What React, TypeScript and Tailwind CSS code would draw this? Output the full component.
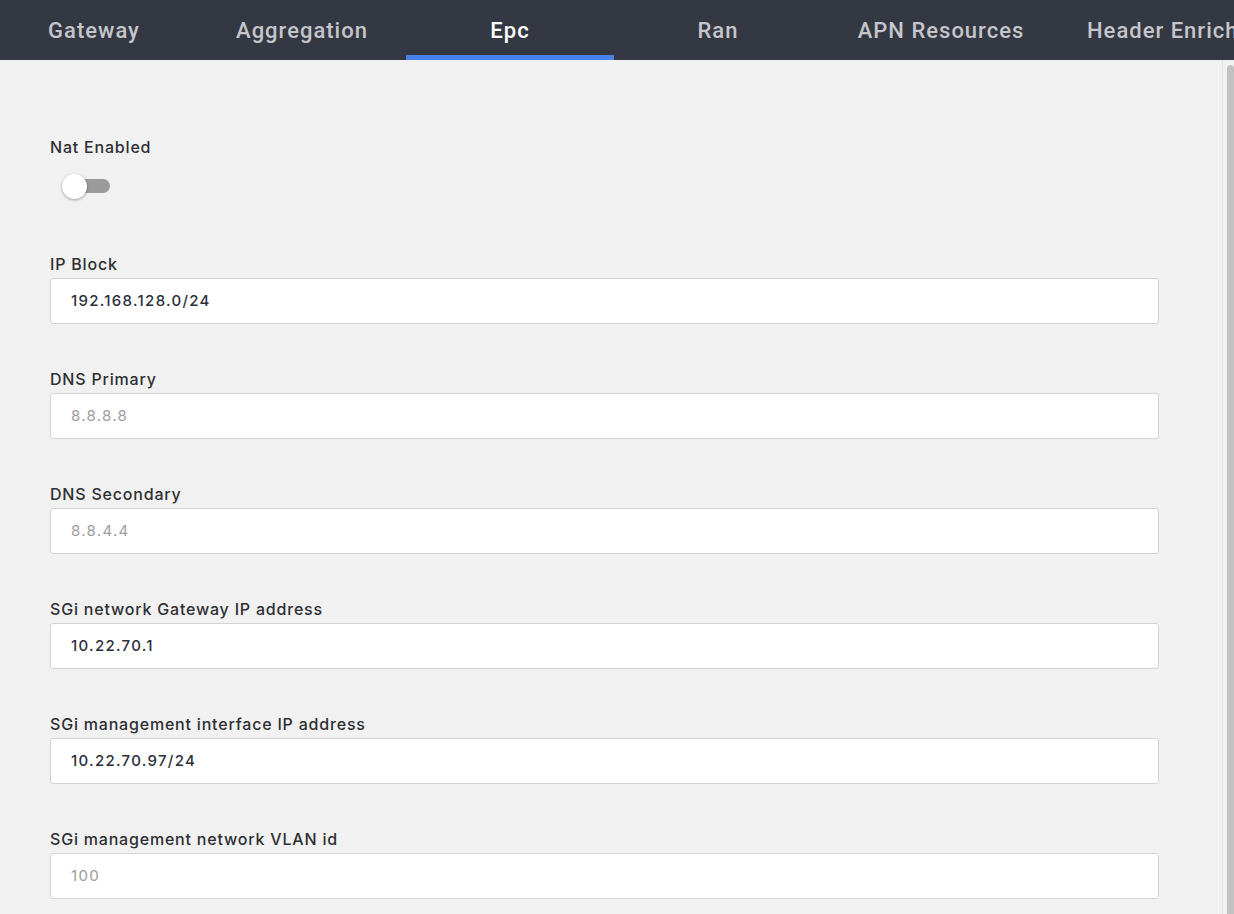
const tabs = [
  { label: "Gateway", width: "w-[208px]" },
  { label: "Aggregation", width: "w-[208px]" },
  { label: "Epc", width: "w-[208px]", active: true },
  { label: "Ran", width: "w-[208px]" },
  { label: "APN Resources", width: "w-[238px]" },
  { label: "Header Enrichment", width: "w-[260px]" },
];

const fields = [
  { label: "IP Block", value: "192.168.128.0/24" },
  { label: "DNS Primary", placeholder: "8.8.8.8" },
  { label: "DNS Secondary", placeholder: "8.8.4.4" },
  { label: "SGi network Gateway IP address", value: "10.22.70.1" },
  { label: "SGi management interface IP address", value: "10.22.70.97/24" },
  { label: "SGi management network VLAN id", placeholder: "100" },
];

function Toggle() {
  return (
    <div className="relative ml-[12px] mt-[17px] h-[24px] w-[48px]">
      <div className="absolute left-[2px] top-[5px] h-[14px] w-[46px] rounded-full bg-[#9b9b9b]" />
      <div className="absolute left-0 top-0 h-[25px] w-[25px] rounded-full bg-white shadow-[0_1px_3px_rgba(0,0,0,0.35)]" />
    </div>
  );
}

export default function App() {
  return (
    <div className="relative h-[914px] w-[1234px] overflow-hidden bg-[#f1f1f1] font-['Inter',sans-serif]">
      <div className="flex h-[60px] w-full overflow-hidden bg-[#343843] font-['Roboto',sans-serif]">
        <div className="-ml-[10px] flex shrink-0">
          {tabs.map((tab) => (
            <div
              key={tab.label}
              className={`relative flex h-[60px] shrink-0 items-center justify-center whitespace-nowrap text-[22px] font-medium tracking-[1px] ${tab.width} ${
                tab.active ? "text-white" : "text-[#c4c6cb]"
              }`}
            >
              {tab.label}
              {tab.active && <div className="absolute bottom-0 left-0 h-[5px] w-full bg-[#4a80e8]" />}
            </div>
          ))}
        </div>
      </div>

      <div className="pl-[50px] pr-[75px] pt-[77px]">
        <div className="text-[16px] font-medium leading-[20px] tracking-[0.8px] text-[#2e2f33]">Nat Enabled</div>
        <Toggle />

        <div className="mt-[56px] flex flex-col gap-[45px]">
          {fields.map((f) => (
            <div key={f.label}>
              <div className="mb-[4px] text-[16px] font-medium leading-[20px] tracking-[0.8px] text-[#2e2f33]">
                {f.label}
              </div>
              <div className="flex h-[46px] w-[1109px] items-center rounded-[3px] border border-[#d3d3d3] bg-white px-[20px] text-[15px] tracking-[1.3px]">
                {f.value ? (
                  <span className="font-medium text-[#2b2f3b]">{f.value}</span>
                ) : (
                  <span className="text-[#9c9c9c]">{f.placeholder}</span>
                )}
              </div>
            </div>
          ))}
        </div>
      </div>

      <div className="absolute bottom-0 right-0 top-[60px] w-[12px] border-l border-[#e2e2e2] bg-[#f1f1f1]">
        <div className="absolute bottom-0 left-[4px] right-0 top-[5px] rounded-t-[4px] bg-[#c2c2c2]" />
      </div>
    </div>
  );
}
